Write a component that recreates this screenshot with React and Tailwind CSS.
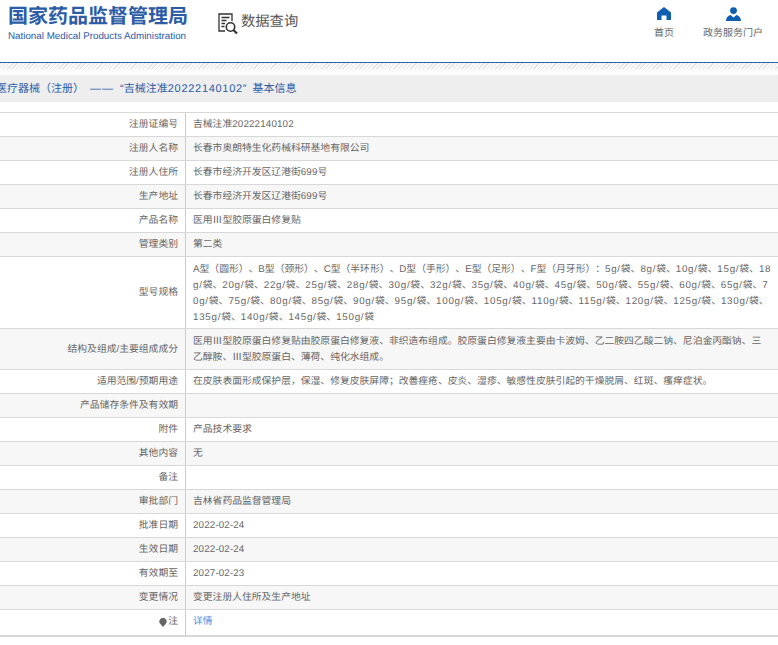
const rows = [
  { label: '注册证编号', value: '吉械注准20222140102' },
  { label: '注册人名称', value: '长春市奥朗特生化药械科研基地有限公司' },
  { label: '注册人住所', value: '长春市经济开发区辽港街699号' },
  { label: '生产地址', value: '长春市经济开发区辽港街699号' },
  { label: '产品名称', value: '医用Ⅲ型胶原蛋白修复贴' },
  { label: '管理类别', value: '第二类' },
  {
    label: '型号规格',
    pad: 'pt-[5px] pb-[2px] pr-[5px]',
    value:
      'A型（圆形）、B型（颈形）、C型（半环形）、D型（手形）、E型（足形）、F型（月牙形）：5g/袋、8g/袋、10g/袋、15g/袋、18g/袋、20g/袋、22g/袋、25g/袋、28g/袋、30g/袋、32g/袋、35g/袋、40g/袋、45g/袋、50g/袋、55g/袋、60g/袋、65g/袋、70g/袋、75g/袋、80g/袋、85g/袋、90g/袋、95g/袋、100g/袋、105g/袋、110g/袋、115g/袋、120g/袋、125g/袋、130g/袋、135g/袋、140g/袋、145g/袋、150g/袋',
  },
  {
    label: '结构及组成/主要组成成分',
    pad: 'pt-[5px] pb-[3px] pr-[8px]',
    value:
      '医用Ⅲ型胶原蛋白修复贴由胶原蛋白修复液、非织造布组成。胶原蛋白修复液主要由卡波姆、乙二胺四乙酸二钠、尼泊金丙酯钠、三乙醇胺、Ⅲ型胶原蛋白、薄荷、纯化水组成。',
  },
  {
    label: '适用范围/预期用途',
    value: '在皮肤表面形成保护层，保湿、修复皮肤屏障；改善痤疮、皮炎、湿疹、敏感性皮肤引起的干燥脱屑、红斑、瘙痒症状。',
  },
  { label: '产品储存条件及有效期', value: '' },
  { label: '附件', value: '产品技术要求' },
  { label: '其他内容', value: '无' },
  { label: '备注', value: '', pad: 'pt-[4px] pb-[4px]' },
  { label: '审批部门', value: '吉林省药品监督管理局' },
  { label: '批准日期', value: '2022-02-24' },
  { label: '生效日期', value: '2022-02-24' },
  { label: '有效期至', value: '2027-02-23' },
  { label: '变更情况', value: '变更注册人住所及生产地址' },
];

const font = { fontFamily: '"Liberation Sans", "Noto Sans CJK SC", sans-serif' };

// the roman numeral has to come from the CJK font, and digits and "g/" run a bit wide in the reference
const renderValue = (text) =>
  text.split(/(Ⅲ|\d+g\/|\d+)/).map((part, i) => {
    if (part === 'Ⅲ') return <span key={i} className="font-['Noto_Sans_CJK_SC'] leading-none">{part}</span>;
    if (part.endsWith('g/')) return <span key={i} className="tracking-[0.72px]">{part}</span>;
    if (/^\d+$/.test(part)) return <span key={i} className="tracking-[0.15px]">{part}</span>;
    return part;
  });

const DataSearchIcon = () => (
  <svg width="23" height="23" viewBox="0 0 23 23" fill="none" stroke="#333" strokeWidth="1.3">
    <path d="M15 9V2H2v17h6" />
    <path d="M4.500 5.500h8M4.500 8.500h5M4.500 11.500h3.500M4.500 14.500h3" />
    <circle cx="13.500" cy="15" r="4.200" strokeWidth="1.600" />
    <path d="M16.500 18l3.500 3.500" strokeWidth="2.200" />
  </svg>
);

const HomeIcon = () => (
  <svg width="14" height="13" viewBox="0 0 14 13" fill="#0f5eb0">
    <path d="M7 0L0 5.500V13h4.500V8.500h5V13H14V5.500z" />
  </svg>
);

const UserIcon = () => (
  <svg width="15" height="14" viewBox="0 0 15 14" fill="#0f5eb0">
    <circle cx="7.500" cy="3.600" r="3.400" />
    <path d="M0 14c0-3.500 2-5.500 4.500-6l3 2.500 3-2.500c2.500.5 4.500 2.500 4.500 6z" />
  </svg>
);

const PinIcon = () => (
  <svg width="8" height="9" viewBox="0 0 8 9" fill="#666">
    <path d="M4 9L1 5.500A3.600 3.600 0 1 1 7 5.500z" />
  </svg>
);

export default function App() {
  return (
    <div className="w-[778px] h-[645px] overflow-hidden bg-white text-[#666] [text-spacing-trim:space-all] [text-rendering:geometricPrecision]" style={font}>
      <header className="h-[62px] flex">
        <div className="ml-2 mt-[5px] w-[178px]">
          <div className="text-[20px] leading-[24px] font-bold text-[#2b5ca6] whitespace-nowrap">国家药品监督管理局</div>
          <div className="text-[9.800px] leading-[12px] mt-[2px] text-[#2b5ca6] whitespace-nowrap">National Medical Products Administration</div>
        </div>
        <div className="ml-[31px] mt-[12px] flex items-start gap-[1px]">
          <DataSearchIcon />
          <span className="text-[14.300px] leading-[20px] text-[#555] whitespace-nowrap">数据查询</span>
        </div>
        <nav className="ml-auto flex text-[10px] text-[#666]">
          <div className="w-[22px] mr-[28px] mt-[7px] flex flex-col items-center gap-[8px]">
            <HomeIcon />
            <span className="leading-[12px] whitespace-nowrap">首页</span>
          </div>
          <div className="w-[60px] mr-[15px] mt-[7px] flex flex-col items-center gap-[7px]">
            <UserIcon />
            <span className="leading-[12px] whitespace-nowrap">政务服务门户</span>
          </div>
        </nav>
      </header>
      <div className="border-t border-[#2a66a8]">
        <div className="h-[6px] bg-[repeating-linear-gradient(135deg,#e4e4e4_0,#e4e4e4_1px,#fafafa_1px,#fafafa_3px)]" />
        <div className="h-[6px] bg-gradient-to-b from-[#f8f8f8] to-white" />
      </div>
      <div className="h-[27px] pt-[1px] bg-[#eeeeee] flex items-center text-[11px] text-[#2b5ca6] whitespace-nowrap">
        <span className="-ml-[4px] [word-spacing:3px]">
          医疗器械（注册） <span className="tracking-[1px]">——</span> “吉械注准<span className="tracking-[0.7px]">20222140102</span>” 基本信息
        </span>
      </div>
      <div className="mt-[10px] border-t border-[#d8d8d8] text-[9.800px] leading-[16px]">
        {rows.map((row, i) => (
          <div key={row.label} className={`grid grid-cols-[186px_1fr] border-b border-[#d8d8d8] ${i % 2 ? 'bg-[#f7f7f7]' : 'bg-white'}`}>
            <div className="min-h-[23px] pr-[7px] flex items-center justify-end border-r border-[#ccc] pt-[1px]">{row.label}</div>
            <div className={`pl-[7px] break-all ${row.pad || 'pt-[4px] pb-[3px] pr-[8px]'}`}>{renderValue(row.value)}</div>
          </div>
        ))}
        <div className="grid grid-cols-[186px_1fr] border-b-2 border-[#d8d8d8]">
          <div className="pr-[7px] pt-[4px] pb-[4.500px] border-r border-[#ccc] flex justify-end items-center gap-[1px]">
            <PinIcon />
            <span>注</span>
          </div>
          <div className="pl-[7px] pt-[4px] pb-[4.500px] text-[#4a90e2]">详情</div>
        </div>
      </div>
    </div>
  );
}
